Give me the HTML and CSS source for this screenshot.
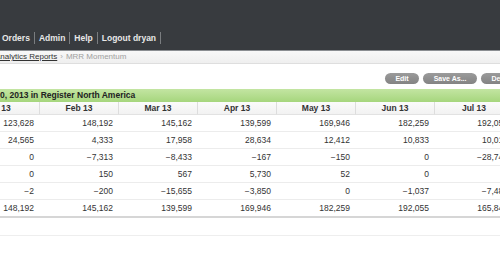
FILE: index.html
```html
<!DOCTYPE html>
<html lang="en">
<head>
<meta charset="utf-8">
<title>MRR Momentum</title>
<link rel="stylesheet" href="styles.css">
</head>
<body>
<header class="topbar">
  <nav class="nav">
    <a class="nav-link">Orders</a><span class="sep"></span>
    <a class="nav-link">Admin</a><span class="sep"></span>
    <a class="nav-link">Help</a><span class="sep"></span>
    <a class="nav-link">Logout dryan</a><span class="sep"></span>
  </nav>
</header>
<div class="crumbs">
  <a class="crumb-link">Analytics Reports</a><span class="crumb-arrow">›</span><span class="crumb-current">MRR Momentum</span>
</div>
<div class="toolbar">
  <button class="btn">Edit</button>
  <button class="btn">Save As...</button>
  <button class="btn">Delete</button>
</div>
<div class="band">0, 2013 in Register North America</div>
<div class="table-wrap">
  <table class="grid">
    <colgroup>
      <col class="c"><col class="c"><col class="c"><col class="c"><col class="c"><col class="c"><col class="c">
    </colgroup>
    <thead>
      <tr><th class="first">Jan 13</th><th>Feb 13</th><th>Mar 13</th><th>Apr 13</th><th>May 13</th><th>Jun 13</th><th>Jul 13</th></tr>
    </thead>
    <tbody>
      <tr><td>123,628</td><td>148,192</td><td>145,162</td><td>139,599</td><td>169,946</td><td>182,259</td><td>192,055</td></tr>
      <tr><td>24,565</td><td>4,333</td><td>17,958</td><td>28,634</td><td>12,412</td><td>10,833</td><td>10,012</td></tr>
      <tr><td>0</td><td>−7,313</td><td>−8,433</td><td>−167</td><td>−150</td><td>0</td><td>−28,741</td></tr>
      <tr><td>0</td><td>150</td><td>567</td><td>5,730</td><td>52</td><td>0</td><td>0</td></tr>
      <tr><td>−2</td><td>−200</td><td>−15,655</td><td>−3,850</td><td>0</td><td>−1,037</td><td>−7,483</td></tr>
      <tr class="total"><td>148,192</td><td>145,162</td><td>139,599</td><td>169,946</td><td>182,259</td><td>192,055</td><td>165,843</td></tr>
    </tbody>
  </table>
  <div class="table-foot"></div>
</div>
</body>
</html>
```

FILE: styles.css
```css
html, body {
  margin: 0;
  padding: 0;
  background: #ffffff;
  overflow: hidden;
}
body {
  font-family: "Liberation Sans", Arial, sans-serif;
  color: #333333;
  width: 500px;
}
.topbar {
  height: 50px;
  background: #383b3f;
  border-bottom: 1px solid #8b8e92;
  display: flex;
  align-items: flex-end;
}
.nav {
  display: flex;
  align-items: center;
  padding: 0 0 6px 2px;
  height: 12px;
}
.nav-link {
  font-weight: bold;
  font-size: 8.5px;
  line-height: 12px;
  color: #e8e8e8;
}
.sep {
  display: block;
  width: 1px;
  height: 12px;
  background: #7a7d80;
  margin: 0 4px;
}
.crumbs {
  height: 12px;
  background: linear-gradient(#f8f8f8, #efefef);
  border-bottom: 1px solid #dedede;
  display: flex;
  align-items: center;
  font-size: 8px;
  line-height: 12px;
  margin-left: -5px;
}
.crumb-link {
  color: #333333;
  text-decoration: underline;
}
.crumb-arrow {
  color: #aaaaaa;
  margin: 0 3px;
}
.crumb-current {
  color: #a0a0a0;
}
.toolbar {
  display: flex;
  justify-content: flex-end;
  gap: 4px;
  padding: 9px 0 5px;
  margin-right: -23px;
}
.btn {
  height: 11px;
  padding: 0 10.5px;
  border: none;
  border-radius: 6px;
  background: linear-gradient(#9b9b9b, #838383);
  color: #ffffff;
  font-family: "Liberation Sans", Arial, sans-serif;
  font-weight: bold;
  font-size: 7px;
  line-height: 11px;
  white-space: nowrap;
}
.band {
  height: 13px;
  background: linear-gradient(#c3e5a2, #a6d67d);
  font-weight: bold;
  font-size: 8.5px;
  line-height: 13px;
  color: #222222;
  white-space: nowrap;
}
.table-wrap {
  margin-left: -39px;
  width: 553px;
}
.grid {
  border-collapse: separate;
  border-spacing: 0;
  table-layout: fixed;
  width: 553px;
}
.c {
  width: 79px;
}
.grid th {
  height: 12px;
  padding: 0;
  font-size: 8.5px;
  line-height: 12px;
  font-weight: bold;
  color: #333333;
  background: linear-gradient(#fbfbfb, #f2f2f2);
  border-right: 1px solid #dddddd;
  border-bottom: 1px solid #e2e2e2;
  text-align: center;
  white-space: nowrap;
}
.grid th.first {
  padding-right: 5px;
}
.grid td {
  height: 16px;
  padding: 0 6px 0 0;
  font-size: 8.5px;
  line-height: 16px;
  color: #333333;
  text-align: right;
  border-bottom: 1px solid #ececec;
  white-space: nowrap;
}
.grid .total td {
  border-bottom: 2px solid #d6d6d6;
}
.table-foot {
  height: 17px;
  border-bottom: 1px solid #eeeeee;
}
```
